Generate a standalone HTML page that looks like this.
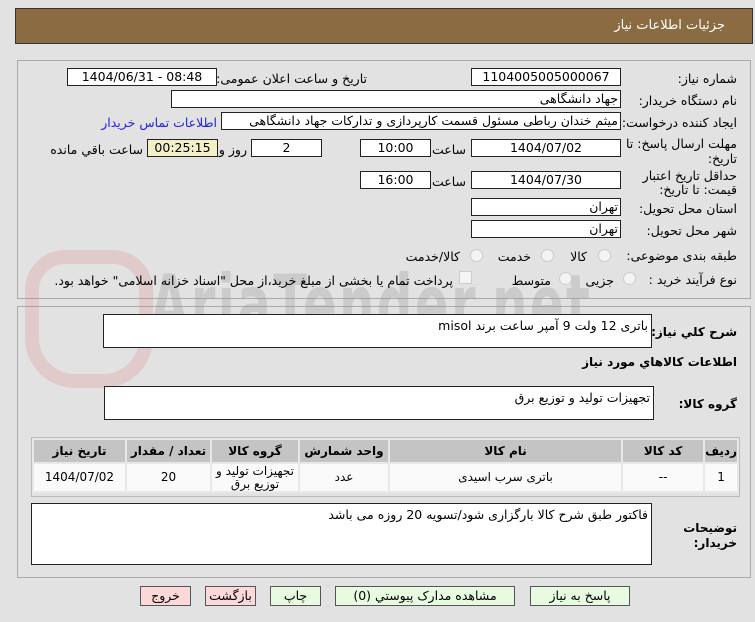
<!DOCTYPE html>
<html><head><meta charset="utf-8"><style>
body{margin:0;width:755px;height:622px;background:#e2e2e2;font-family:"DejaVu Sans","Liberation Sans",sans-serif;font-size:12px;color:#000;position:relative;overflow:hidden}
.a{position:absolute}
.in{position:absolute;background:#fff;border:1px solid #222;height:16px;line-height:16px;text-align:center;font-size:12.5px;box-sizing:content-box}
.r{text-align:right;padding-right:2px}
.l{position:absolute;direction:rtl;white-space:nowrap;font-size:12.5px}
.ta{position:absolute;background:#fff;border:1px solid #222;direction:rtl;text-align:right;padding:3px 3px;box-sizing:border-box;font-size:12.5px}
.btn{position:absolute;top:586px;height:18px;border:1px solid #555;line-height:18px;text-align:center;font-size:12.5px;background:#e6fbe0}
.rad{position:absolute;width:11px;height:11px;border-radius:50%;border:1px solid #ccc;background:#f4f4f4}
table{border-collapse:separate;border-spacing:2px;background:#e8e8e8}
td,th{text-align:center;font-size:12px;padding:0;line-height:13px}
th{background:#c4c4c4;height:22px;font-weight:bold}
td{background:#fafafa;height:27px}
</style></head><body>
<div class="a" style="left:15px;top:8px;width:736px;height:34px;background:#8b6b41;border:1px solid #333"></div>
<div class="l" style="right:30px;top:18px;color:#fff;font-size:13px">جزئیات اطلاعات نیاز</div>

<div class="a" style="left:17px;top:60px;width:732px;height:237px;border:1px solid #aaa"></div>
<div class="a" style="left:17px;top:306px;width:732px;height:270px;border:1px solid #aaa"></div>

<div class="a" style="left:150px;top:258px;font-size:80px;font-weight:bold;color:rgba(150,150,150,.3);transform:scaleX(0.62);transform-origin:left top;letter-spacing:4px;white-space:nowrap">AriaTender.net</div>
<div class="a" style="left:25px;top:250px;width:100px;height:110px;border:14px solid rgba(220,120,120,.22);border-radius:40px 40px 50px 50px"></div>

<div class="l" style="right:18px;top:71px">شماره نیاز:</div>
<div class="in" style="left:471px;top:68px;width:148px">1104005005000067</div>
<div class="l" style="right:388px;top:71px">تاریخ و ساعت اعلان عمومی:</div>
<div class="in" style="left:67px;top:68px;width:148px">1404/06/31 - 08:48</div>

<div class="l" style="right:18px;top:93px">نام دستگاه خریدار:</div>
<div class="in r" style="left:171px;top:90px;width:446px">جهاد دانشگاهی</div>

<div class="l" style="right:18px;top:115px">ایجاد کننده درخواست:</div>
<div class="in r" style="left:221px;top:112px;width:396px">میثم خندان رباطی مسئول قسمت کارپردازی و تدارکات جهاد دانشگاهی</div>
<div class="l" style="right:538px;top:115px;color:#2222dd">اطلاعات تماس خریدار</div>

<div class="l" style="right:18px;top:136px">مهلت ارسال پاسخ: تا</div>
<div class="l" style="right:18px;top:151px">تاریخ:</div>
<div class="in" style="left:471px;top:139px;width:148px">1404/07/02</div>
<div class="l" style="right:289px;top:142px">ساعت</div>
<div class="in" style="left:360px;top:139px;width:69px">10:00</div>
<div class="in" style="left:251px;top:139px;width:69px">2</div>
<div class="l" style="right:508px;top:142px">روز و</div>
<div class="in" style="left:147px;top:139px;width:69px;background:#f3f0c8">00:25:15</div>
<div class="l" style="right:612px;top:142px">ساعت باقي مانده</div>

<div class="l" style="right:18px;top:168px">حداقل تاریخ اعتبار</div>
<div class="l" style="right:18px;top:182px">قیمت: تا تاریخ:</div>
<div class="in" style="left:471px;top:171px;width:148px">1404/07/30</div>
<div class="l" style="right:289px;top:174px">ساعت</div>
<div class="in" style="left:360px;top:171px;width:69px">16:00</div>

<div class="l" style="right:18px;top:201px">استان محل تحویل:</div>
<div class="in r" style="left:471px;top:198px;width:146px">تهران</div>
<div class="l" style="right:18px;top:223px">شهر محل تحویل:</div>
<div class="in r" style="left:471px;top:220px;width:146px">تهران</div>

<div class="l" style="right:18px;top:248px">طبقه بندی موضوعی:</div>
<div class="rad" style="left:598px;top:249px"></div><div class="l" style="right:168px;top:249px">کالا</div>
<div class="rad" style="left:541px;top:249px"></div><div class="l" style="right:224px;top:249px">خدمت</div>
<div class="rad" style="left:470px;top:249px"></div><div class="l" style="right:295px;top:249px">کالا/خدمت</div>

<div class="l" style="right:18px;top:272px">نوع فرآیند خرید :</div>
<div class="rad" style="left:623px;top:272px"></div><div class="l" style="right:141px;top:273px">جزیی</div>
<div class="rad" style="left:559px;top:272px"></div><div class="l" style="right:204px;top:273px">متوسط</div>
<div class="a" style="left:459px;top:271px;width:11px;height:11px;border:1px solid #ccc;background:#f4f4f4"></div>
<div class="l" style="right:302px;top:273px">پرداخت تمام یا بخشی از مبلغ خرید،از محل "اسناد خزانه اسلامی" خواهد بود.</div>

<div class="l" style="right:18px;top:325px;font-weight:bold;font-size:12px">شرح کلي نیاز:</div>
<div class="ta" style="left:103px;top:314px;width:549px;height:34px">باتری 12 ولت 9 آمپر ساعت برند misol</div>
<div class="l" style="right:18px;top:355px;font-weight:bold;font-size:12px">اطلاعات کالاهاي مورد نیاز</div>
<div class="l" style="right:18px;top:397px;font-weight:bold;font-size:12px">گروه کالا:</div>
<div class="ta" style="left:104px;top:386px;width:550px;height:34px">تجهیزات تولید و توزیع برق</div>

<div class="a" style="left:31px;top:437px;width:707px;height:58px;border:1px solid #bbb;overflow:hidden">
<table style="width:707px;direction:rtl"><tr>
<th style="width:26px">ردیف</th><th style="width:80px">کد کالا</th><th>نام کالا</th><th style="width:88px">واحد شمارش</th><th style="width:86px">گروه کالا</th><th style="width:83px">تعداد / مقدار</th><th style="width:91px">تاریخ نیاز</th></tr>
<tr><td>1</td><td>--</td><td>باتری سرب اسیدی</td><td>عدد</td><td>تجهیزات تولید و توزیع برق</td><td>20</td><td>1404/07/02</td></tr></table></div>

<div class="l" style="right:18px;top:521px;font-weight:bold;font-size:12px">توضیحات</div>
<div class="l" style="right:18px;top:536px;font-weight:bold;font-size:12px">خریدار:</div>
<div class="ta" style="left:31px;top:503px;width:621px;height:62px">فاکتور طبق شرح کالا بارگزاری شود/تسویه 20 روزه می باشد</div>

<div class="btn" style="left:140px;width:49px;background:#fcd9d9">خروج</div>
<div class="btn" style="left:205px;width:49px;background:#fcd9d9">بازگشت</div>
<div class="btn" style="left:270px;width:49px">چاپ</div>
<div class="btn" style="left:335px;width:178px">مشاهده مدارک پیوستي (0)</div>
<div class="btn" style="left:530px;width:98px">پاسخ به نیاز</div>
</body></html>
